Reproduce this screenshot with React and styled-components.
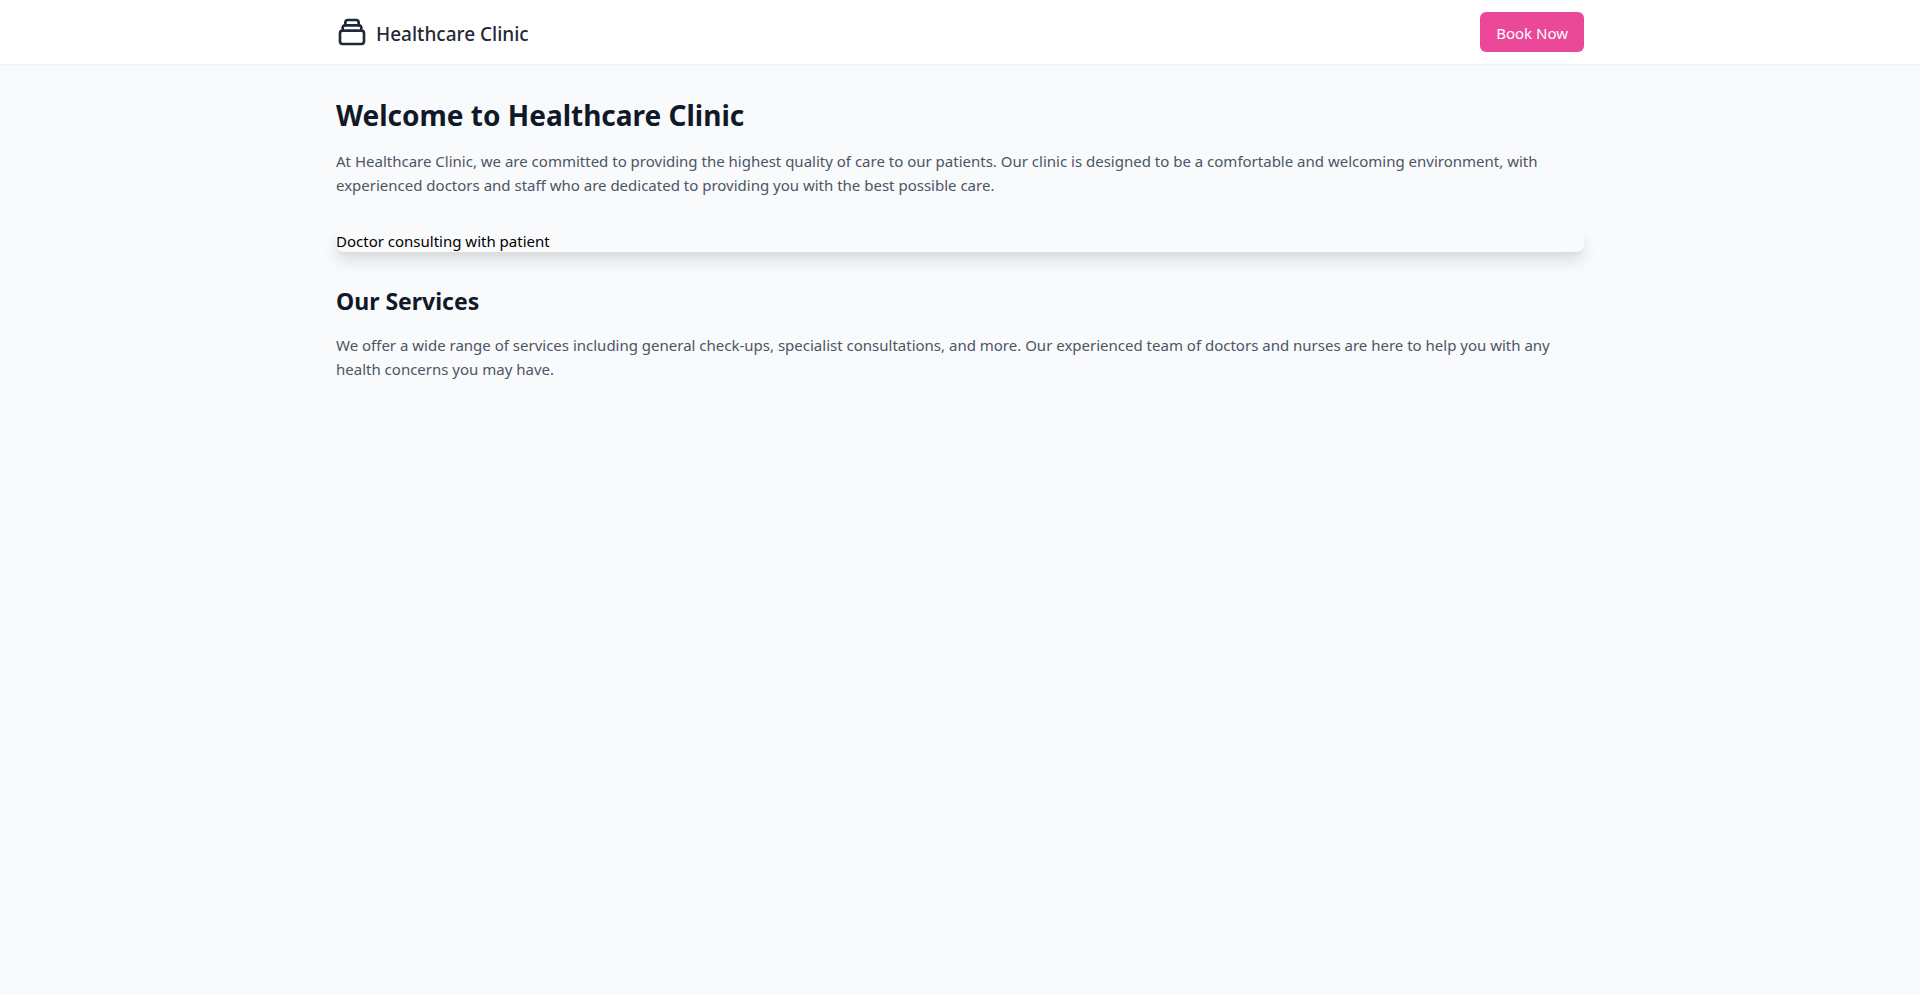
import React from "react";
import styled, { createGlobalStyle } from "styled-components";

const GlobalStyle = createGlobalStyle`
  *, *::before, *::after { box-sizing: border-box; }
  body {
    margin: 0;
    background: #f9fafc;
    color: #000;
    font-family: "Noto Sans", "Segoe UI", sans-serif;
    font-size: 15px;
    line-height: 24px;
  }
`;

const Header = styled.header`
  background: #fff;
  box-shadow: 0 1px 2px 0 rgba(0, 0, 0, 0.05);
`;

const Container = styled.div`
  max-width: 1280px;
  margin: 0 auto;
  padding: 0 16px;
`;

const HeaderRow = styled(Container)`
  display: flex;
  align-items: center;
  justify-content: space-between;
  min-height: 64px;
`;

const Brand = styled.div`
  display: flex;
  align-items: center;
  gap: 8px;
  color: #1f2937;
`;

const BrandIcon = styled.svg`
  display: block;
  width: 32px;
  height: 32px;
`;

const BrandName = styled.span`
  padding-top: 4px;
  font-size: 19px;
  line-height: 28px;
  font-weight: 500;
`;

const BookButton = styled.button`
  padding: 9px 16px 7px;
  border: 0;
  border-radius: 6px;
  background: #ec4899;
  color: #fff;
  font: inherit;
  cursor: pointer;
`;

const Main = styled(Container).attrs({ as: "main" })`
  padding-top: 33px;
  padding-bottom: 32px;
`;

const Title = styled.h1`
  margin: 0 0 16px;
  color: #111827;
  font-size: 28px;
  line-height: 36px;
  font-weight: 700;
`;

const Subtitle = styled.h2`
  margin: 0 0 16px;
  color: #111827;
  font-size: 23px;
  line-height: 32px;
  font-weight: 700;
`;

const Text = styled.p`
  margin: 0;
  color: #4b5563;
`;

const Figure = styled.div`
  margin: 31px 0 33px;
  padding-top: 2px;
  border-radius: 8px;
  line-height: 22px;
  box-shadow: 0 10px 15px 0 rgba(0, 0, 0, 0.1), 0 4px 6px -2px rgba(0, 0, 0, 0.05);
`;

export default function App() {
  return (
    <>
      <GlobalStyle />
      <Header>
        <HeaderRow>
          <Brand>
            <BrandIcon viewBox="0 0 24 24" fill="none" stroke="currentColor" aria-hidden="true">
              <path
                strokeLinecap="round"
                strokeLinejoin="round"
                strokeWidth="2"
                d="M19 11H5m14 0a2 2 0 012 2v6a2 2 0 01-2 2H5a2 2 0 01-2-2v-6a2 2 0 012-2m14 0V9a2 2 0 00-2-2M5 11V9a2 2 0 012-2m0 0V5a2 2 0 012-2h6a2 2 0 012 2v2M7 7h10"
              />
            </BrandIcon>
            <BrandName>Healthcare Clinic</BrandName>
          </Brand>
          <BookButton type="button">Book Now</BookButton>
        </HeaderRow>
      </Header>
      <Main>
        <Title>Welcome to Healthcare Clinic</Title>
        <Text>
          At Healthcare Clinic, we are committed to providing the highest quality of care to our
          patients. Our clinic is designed to be a comfortable and welcoming environment, with
          experienced doctors and staff who are dedicated to providing you with the best possible
          care.
        </Text>
        <Figure>Doctor consulting with patient</Figure>
        <Subtitle>Our Services</Subtitle>
        <Text>
          We offer a wide range of services including general check-ups, specialist consultations,
          and more. Our experienced team of doctors and nurses are here to help you with any health
          concerns you may have.
        </Text>
      </Main>
    </>
  );
}
